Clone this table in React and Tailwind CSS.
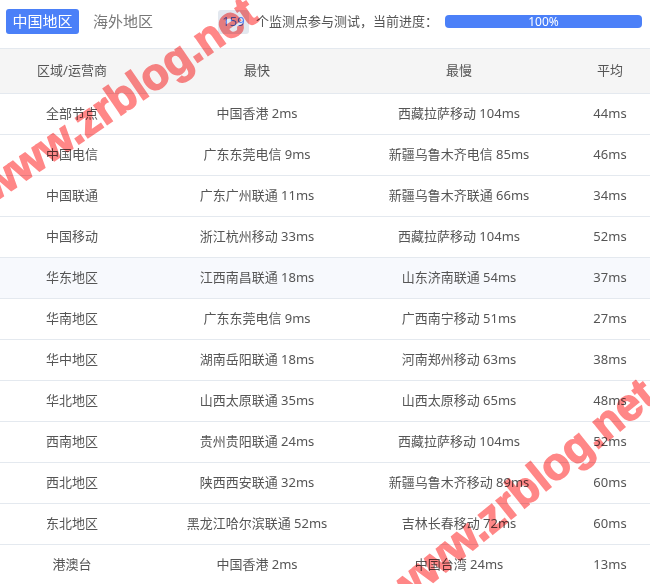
import React from 'react';

const rows = [
    ['全部节点', '中国香港 2ms', '西藏拉萨移动 104ms', '44ms'],
    ['中国电信', '广东东莞电信 9ms', '新疆乌鲁木齐电信 85ms', '46ms'],
    ['中国联通', '广东广州联通 11ms', '新疆乌鲁木齐联通 66ms', '34ms'],
    ['中国移动', '浙江杭州移动 33ms', '西藏拉萨移动 104ms', '52ms'],
    ['华东地区', '江西南昌联通 18ms', '山东济南联通 54ms', '37ms'],
    ['华南地区', '广东东莞电信 9ms', '广西南宁移动 51ms', '27ms'],
    ['华中地区', '湖南岳阳联通 18ms', '河南郑州移动 63ms', '38ms'],
    ['华北地区', '山西太原联通 35ms', '山西太原移动 65ms', '48ms'],
    ['西南地区', '贵州贵阳联通 24ms', '西藏拉萨移动 104ms', '52ms'],
    ['西北地区', '陕西西安联通 32ms', '新疆乌鲁木齐移动 89ms', '60ms'],
    ['东北地区', '黑龙江哈尔滨联通 52ms', '吉林长春移动 72ms', '60ms'],
    ['港澳台', '中国香港 2ms', '中国台湾 24ms', '13ms'],
];

const gridCols = 'grid grid-cols-[144px_226px_178px_124px] w-[672px]';

const App = () => {
    return (
        <div
            className="relative w-[650px] h-[584px] overflow-hidden bg-white text-[#555]"
            style={{ fontFamily: '"Noto Sans", "Noto Sans CJK SC", sans-serif' }}
        >
            {/* top bar */}
            <div className="flex items-center h-[48px] pl-[6px] pb-[5px]">
                <div className="w-[73px] h-[25px] flex items-center justify-center rounded-[3px] bg-[#4b80f8] text-white text-[15px]">
                    中国地区
                </div>
                <div className="ml-[14px] text-[15px] text-[#777]">海外地区</div>
                <div className="ml-[65px] w-[31px] h-[24px] flex items-center justify-center rounded-[3px] bg-[#e3e8ef] text-[#4d7ef7] text-[13px]">
                    159
                </div>
                <div className="ml-[7px] text-[13px] text-[#555] w-[182px]">个监测点参与测试，当前进度：</div>
                <div className="ml-[7px] w-[197px] h-[13px] rounded-[4px] bg-[#4b80f8] flex items-center justify-center text-white text-[12px] leading-none">
                    100%
                </div>
            </div>

            {/* table */}
            <div className="border-t border-[#e4e9ef]">
                <div className={`${gridCols} h-[45px] items-center bg-[#f5f5f5] border-b border-[#e4e9ef] text-[13px] text-center`}>
                    <div>区域/运营商</div>
                    <div>最快</div>
                    <div>最慢</div>
                    <div>平均</div>
                </div>
                {rows.map((r, i) => (
                    <div
                        key={i}
                        className={`${gridCols} h-[41px] items-center border-b border-[#e4e9ef] text-[13px] text-center ${i === 4 ? 'bg-[#f7f9fd]' : ''}`}
                    >
                        {r.map((c, j) => (
                            <div key={j} className="whitespace-nowrap">{c}</div>
                        ))}
                    </div>
                ))}
            </div>

            {/* watermarks */}
            <span
                className="absolute left-[118px] top-[99px] -translate-x-1/2 -translate-y-1/2 rotate-[-34.5deg] whitespace-nowrap text-[44px] font-bold leading-none text-[#ff8787] [-webkit-text-stroke:1.5px_#ff8787] mix-blend-multiply pointer-events-none"
                style={{ fontFamily: '"Liberation Sans", Arial, sans-serif' }}
            >
                www.zrblog.net
            </span>
            <span
                className="absolute left-[520px] top-[492px] -translate-x-1/2 -translate-y-1/2 rotate-[-39deg] whitespace-nowrap text-[45px] font-bold leading-none text-[#ff8787] [-webkit-text-stroke:1.5px_#ff8787] mix-blend-multiply pointer-events-none"
                style={{ fontFamily: '"Liberation Sans", Arial, sans-serif' }}
            >
                www.zrblog.net
            </span>
        </div>
    );
};

export default App;
